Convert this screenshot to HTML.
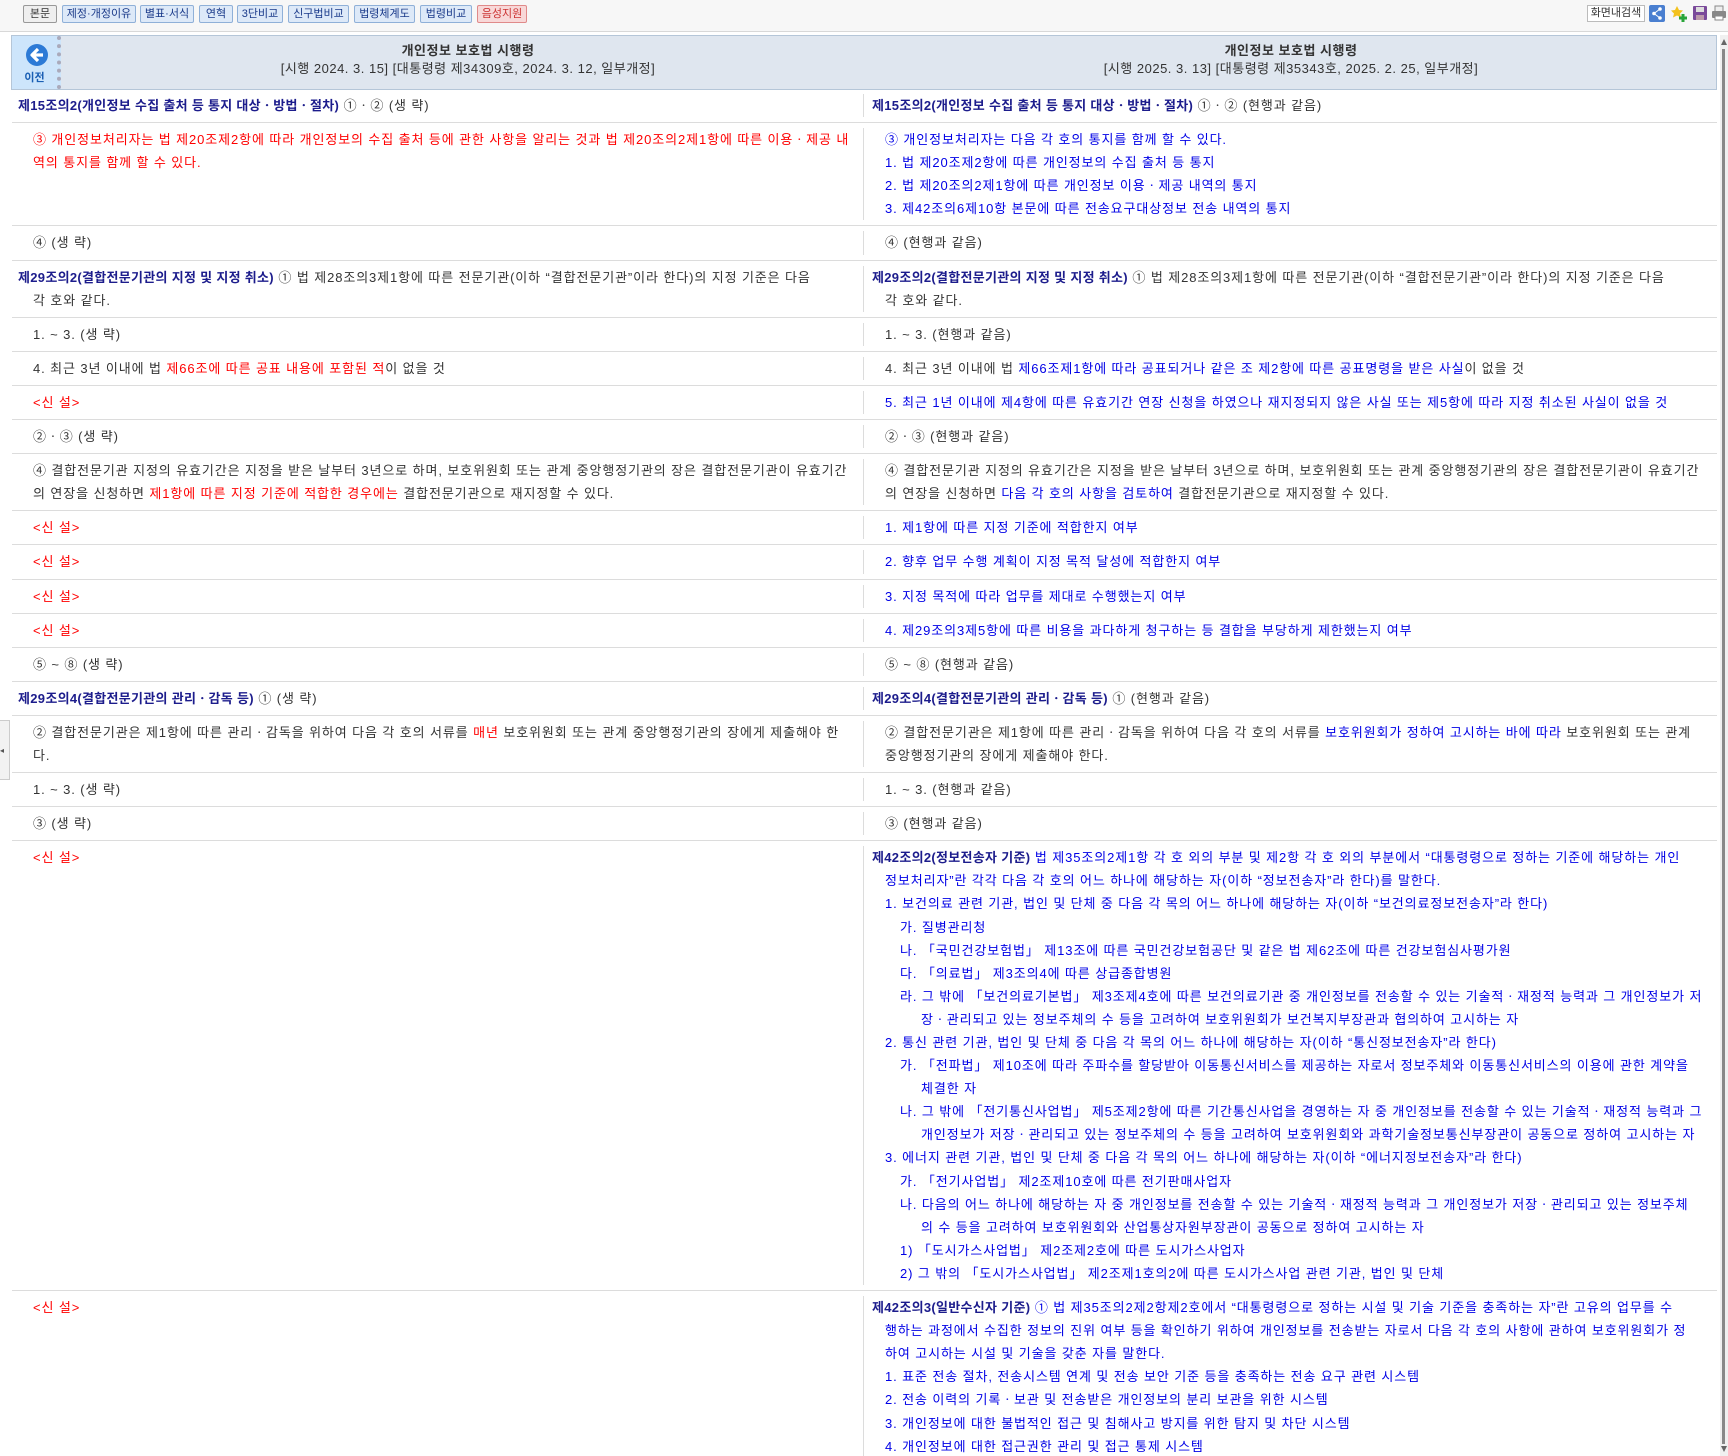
<!DOCTYPE html>
<html lang="ko"><head><meta charset="utf-8">
<style>
*{margin:0;padding:0;box-sizing:border-box}
html,body{width:1728px;height:1456px;overflow:hidden;background:#fff}
body{font-family:"Liberation Sans","Noto Sans CJK KR",sans-serif;font-size:13px;color:#333;position:relative}
.tb{position:absolute;left:0;top:0;width:1728px;height:32px;background:#f7f7f7;border-bottom:1px solid #d8d8d8}
.btn{position:absolute;top:5px;height:18px;border:1px solid #8fb0d8;background:#dde9f8;color:#1a3a8a;font-size:11px;line-height:16px;text-align:center;border-radius:2px;white-space:nowrap}
.hdr{position:absolute;left:11px;top:35px;width:1706px;height:55px;background:#dfe6ef;border:1px solid #b5c6d8}
.prev{position:absolute;left:0;top:0;width:49px;height:53px;background:#cde5fb;border-right:4px dotted #aab}
.ht{position:absolute;top:6px;text-align:center;font-size:13px;line-height:18px;color:#333;letter-spacing:0.5px}
.ht b{display:block;font-weight:bold;font-size:13px}
.rows{position:absolute;left:12px;top:90px;width:1705px}
.row{display:flex;border-bottom:1px solid #dcdcdc;padding:5px 0 5px}
.c{white-space:nowrap;line-height:23.1px;overflow:hidden;letter-spacing:0.9px}
.l{width:852px;border-right:1px solid #dcdcdc}
.r{width:853px}
.l>div{padding-left:21px}
.l>div.t{padding-left:6px}
.r>div{padding-left:21px}
.r>div.t{padding-left:8px}
.r>div.n{padding-left:36px}
.r>div.m{padding-left:57px}
.h{color:#1c1c8c;font-weight:bold;letter-spacing:0.3px}
.red{color:#f00}
.bl{color:#0000e6}
.sb{position:absolute;left:1720px;top:35px;width:8px;height:1421px;background:#f0f0f0}
</style></head><body>
<div class="tb">
<div class="btn" style="left:23px;width:34px;background:#efefef;border-color:#999;color:#333">본문</div>
<div class="btn" style="left:62px;width:74px">제정·개정이유</div>
<div class="btn" style="left:140px;width:54px">별표·서식</div>
<div class="btn" style="left:199px;width:34px">연혁</div>
<div class="btn" style="left:237px;width:46px">3단비교</div>
<div class="btn" style="left:288px;width:61px">신구법비교</div>
<div class="btn" style="left:354px;width:61px">법령체계도</div>
<div class="btn" style="left:420px;width:52px">법령비교</div>
<div class="btn" style="left:477px;width:50px;background:#f8d8d8;border-color:#e08a8a;color:#c33">음성지원</div>
<div style="position:absolute;left:1587px;top:5px;width:58px;height:17px;border:1px solid #bbb;background:#fff;font-size:11px;line-height:15px;text-align:center;color:#333">화면내검색</div>
<svg style="position:absolute;left:1649px;top:5px" width="16" height="17"><rect width="16" height="17" rx="2" fill="#4a7fd0"/><circle cx="11" cy="4" r="1.8" fill="#fff"/><circle cx="5" cy="8.5" r="1.8" fill="#fff"/><circle cx="11" cy="13" r="1.8" fill="#fff"/><path d="M11 4L5 8.5L11 13" stroke="#fff" fill="none"/></svg>
<svg style="position:absolute;left:1670px;top:5px" width="18" height="18"><path d="M7 1l2 4 4 .5-3 3 1 4-4-2-4 2 1-4-3-3 4-.5z" fill="#f3c21d"/><path d="M13 9v8M9 13h8" stroke="#2aa53a" stroke-width="3"/></svg>
<svg style="position:absolute;left:1693px;top:6px" width="14" height="14"><rect width="14" height="14" rx="1" fill="#7a4a9a"/><rect x="3" y="1" width="8" height="5" fill="#ddd"/><rect x="3" y="9" width="8" height="5" fill="#b9a"/></svg>
<svg style="position:absolute;left:1712px;top:5px" width="14" height="16"><rect x="3" y="1" width="8" height="6" fill="#eee" stroke="#888"/><rect x="0" y="6" width="14" height="7" rx="1" fill="#888"/><rect x="3" y="11" width="8" height="4" fill="#fff" stroke="#888"/></svg>
</div>
<div class="hdr">
<div class="prev"><svg style="position:absolute;left:14px;top:8px" width="22" height="22"><circle cx="11" cy="11" r="11" fill="#2c7ad6"/><path d="M12 5L6 11L12 17M6.5 11H17" stroke="#fff" stroke-width="3.2" fill="none" stroke-linejoin="round"/></svg><div style="position:absolute;left:0;top:33px;width:45px;text-align:center;font-size:11px;font-weight:bold;color:#1a5fb4">이전</div></div>
<div class="ht" style="left:60px;width:792px"><b>개인정보 보호법 시행령</b>[시행 2024. 3. 15] [대통령령 제34309호, 2024. 3. 12, 일부개정]</div>
<div class="ht" style="left:853px;width:852px"><b>개인정보 보호법 시행령</b>[시행 2025. 3. 13] [대통령령 제35343호, 2025. 2. 25, 일부개정]</div>
</div>
<div class="rows">
<div class="row" style="padding-top:4px;padding-bottom:5px"><div class="c l"><div class="t"><span class="h">제15조의2(개인정보 수집 출처 등 통지 대상ㆍ방법ㆍ절차)</span> ①ㆍ② (생 략)</div></div><div class="c r"><div class="t"><span class="h">제15조의2(개인정보 수집 출처 등 통지 대상ㆍ방법ㆍ절차)</span> ①ㆍ② (현행과 같음)</div></div></div>
<div class="row"><div class="c l red"><div>③ 개인정보처리자는 법 제20조제2항에 따라 개인정보의 수집 출처 등에 관한 사항을 알리는 것과 법 제20조의2제1항에 따른 이용ㆍ제공 내</div><div>역의 통지를 함께 할 수 있다.</div></div><div class="c r bl"><div>③ 개인정보처리자는 다음 각 호의 통지를 함께 할 수 있다.</div><div>1. 법 제20조제2항에 따른 개인정보의 수집 출처 등 통지</div><div>2. 법 제20조의2제1항에 따른 개인정보 이용ㆍ제공 내역의 통지</div><div>3. 제42조의6제10항 본문에 따른 전송요구대상정보 전송 내역의 통지</div></div></div>
<div class="row"><div class="c l"><div>④ (생 략)</div></div><div class="c r"><div>④ (현행과 같음)</div></div></div>
<div class="row"><div class="c l"><div class="t"><span class="h">제29조의2(결합전문기관의 지정 및 지정 취소)</span> ① 법 제28조의3제1항에 따른 전문기관(이하 “결합전문기관”이라 한다)의 지정 기준은 다음</div><div>각 호와 같다.</div></div><div class="c r"><div class="t"><span class="h">제29조의2(결합전문기관의 지정 및 지정 취소)</span> ① 법 제28조의3제1항에 따른 전문기관(이하 “결합전문기관”이라 한다)의 지정 기준은 다음</div><div>각 호와 같다.</div></div></div>
<div class="row"><div class="c l"><div>1. ~ 3. (생 략)</div></div><div class="c r"><div>1. ~ 3. (현행과 같음)</div></div></div>
<div class="row"><div class="c l"><div>4. 최근 3년 이내에 법 <span class="red">제66조에 따른 공표 내용에 포함된 적</span>이 없을 것</div></div><div class="c r"><div>4. 최근 3년 이내에 법 <span class="bl">제66조제1항에 따라 공표되거나 같은 조 제2항에 따른 공표명령을 받은 사실</span>이 없을 것</div></div></div>
<div class="row"><div class="c l red"><div>&lt;신 설&gt;</div></div><div class="c r bl"><div>5. 최근 1년 이내에 제4항에 따른 유효기간 연장 신청을 하였으나 재지정되지 않은 사실 또는 제5항에 따라 지정 취소된 사실이 없을 것</div></div></div>
<div class="row"><div class="c l"><div>②ㆍ③ (생 략)</div></div><div class="c r"><div>②ㆍ③ (현행과 같음)</div></div></div>
<div class="row"><div class="c l"><div>④ 결합전문기관 지정의 유효기간은 지정을 받은 날부터 3년으로 하며, 보호위원회 또는 관계 중앙행정기관의 장은 결합전문기관이 유효기간</div><div>의 연장을 신청하면 <span class="red">제1항에 따른 지정 기준에 적합한 경우에는</span> 결합전문기관으로 재지정할 수 있다.</div></div><div class="c r"><div>④ 결합전문기관 지정의 유효기간은 지정을 받은 날부터 3년으로 하며, 보호위원회 또는 관계 중앙행정기관의 장은 결합전문기관이 유효기간</div><div>의 연장을 신청하면 <span class="bl">다음 각 호의 사항을 검토하여</span> 결합전문기관으로 재지정할 수 있다.</div></div></div>
<div class="row"><div class="c l red"><div>&lt;신 설&gt;</div></div><div class="c r bl"><div>1. 제1항에 따른 지정 기준에 적합한지 여부</div></div></div>
<div class="row"><div class="c l red"><div>&lt;신 설&gt;</div></div><div class="c r bl"><div>2. 향후 업무 수행 계획이 지정 목적 달성에 적합한지 여부</div></div></div>
<div class="row"><div class="c l red"><div>&lt;신 설&gt;</div></div><div class="c r bl"><div>3. 지정 목적에 따라 업무를 제대로 수행했는지 여부</div></div></div>
<div class="row"><div class="c l red"><div>&lt;신 설&gt;</div></div><div class="c r bl"><div>4. 제29조의3제5항에 따른 비용을 과다하게 청구하는 등 결합을 부당하게 제한했는지 여부</div></div></div>
<div class="row"><div class="c l"><div>⑤ ~ ⑧ (생 략)</div></div><div class="c r"><div>⑤ ~ ⑧ (현행과 같음)</div></div></div>
<div class="row"><div class="c l"><div class="t"><span class="h">제29조의4(결합전문기관의 관리ㆍ감독 등)</span> ① (생 략)</div></div><div class="c r"><div class="t"><span class="h">제29조의4(결합전문기관의 관리ㆍ감독 등)</span> ① (현행과 같음)</div></div></div>
<div class="row"><div class="c l"><div>② 결합전문기관은 제1항에 따른 관리ㆍ감독을 위하여 다음 각 호의 서류를 <span class="red">매년</span> 보호위원회 또는 관계 중앙행정기관의 장에게 제출해야 한</div><div>다.</div></div><div class="c r"><div>② 결합전문기관은 제1항에 따른 관리ㆍ감독을 위하여 다음 각 호의 서류를 <span class="bl">보호위원회가 정하여 고시하는 바에 따라</span> 보호위원회 또는 관계</div><div>중앙행정기관의 장에게 제출해야 한다.</div></div></div>
<div class="row"><div class="c l"><div>1. ~ 3. (생 략)</div></div><div class="c r"><div>1. ~ 3. (현행과 같음)</div></div></div>
<div class="row"><div class="c l"><div>③ (생 략)</div></div><div class="c r"><div>③ (현행과 같음)</div></div></div>
<div class="row"><div class="c l red"><div>&lt;신 설&gt;</div></div><div class="c r bl">
<div class="t"><span class="h">제42조의2(정보전송자 기준)</span> 법 제35조의2제1항 각 호 외의 부분 및 제2항 각 호 외의 부분에서 “대통령령으로 정하는 기준에 해당하는 개인</div>
<div>정보처리자”란 각각 다음 각 호의 어느 하나에 해당하는 자(이하 “정보전송자”라 한다)를 말한다.</div>
<div>1. 보건의료 관련 기관, 법인 및 단체 중 다음 각 목의 어느 하나에 해당하는 자(이하 “보건의료정보전송자”라 한다)</div>
<div class="n">가. 질병관리청</div>
<div class="n">나. 「국민건강보험법」 제13조에 따른 국민건강보험공단 및 같은 법 제62조에 따른 건강보험심사평가원</div>
<div class="n">다. 「의료법」 제3조의4에 따른 상급종합병원</div>
<div class="n">라. 그 밖에 「보건의료기본법」 제3조제4호에 따른 보건의료기관 중 개인정보를 전송할 수 있는 기술적ㆍ재정적 능력과 그 개인정보가 저</div>
<div class="m">장ㆍ관리되고 있는 정보주체의 수 등을 고려하여 보호위원회가 보건복지부장관과 협의하여 고시하는 자</div>
<div>2. 통신 관련 기관, 법인 및 단체 중 다음 각 목의 어느 하나에 해당하는 자(이하 “통신정보전송자”라 한다)</div>
<div class="n">가. 「전파법」 제10조에 따라 주파수를 할당받아 이동통신서비스를 제공하는 자로서 정보주체와 이동통신서비스의 이용에 관한 계약을</div>
<div class="m">체결한 자</div>
<div class="n">나. 그 밖에 「전기통신사업법」 제5조제2항에 따른 기간통신사업을 경영하는 자 중 개인정보를 전송할 수 있는 기술적ㆍ재정적 능력과 그</div>
<div class="m">개인정보가 저장ㆍ관리되고 있는 정보주체의 수 등을 고려하여 보호위원회와 과학기술정보통신부장관이 공동으로 정하여 고시하는 자</div>
<div>3. 에너지 관련 기관, 법인 및 단체 중 다음 각 목의 어느 하나에 해당하는 자(이하 “에너지정보전송자”라 한다)</div>
<div class="n">가. 「전기사업법」 제2조제10호에 따른 전기판매사업자</div>
<div class="n">나. 다음의 어느 하나에 해당하는 자 중 개인정보를 전송할 수 있는 기술적ㆍ재정적 능력과 그 개인정보가 저장ㆍ관리되고 있는 정보주체</div>
<div class="m">의 수 등을 고려하여 보호위원회와 산업통상자원부장관이 공동으로 정하여 고시하는 자</div>
<div class="n">1) 「도시가스사업법」 제2조제2호에 따른 도시가스사업자</div>
<div class="n">2) 그 밖의 「도시가스사업법」 제2조제1호의2에 따른 도시가스사업 관련 기관, 법인 및 단체</div>
</div></div>
<div class="row" style="border-bottom:none"><div class="c l red"><div>&lt;신 설&gt;</div></div><div class="c r bl">
<div class="t"><span class="h">제42조의3(일반수신자 기준)</span> ① 법 제35조의2제2항제2호에서 “대통령령으로 정하는 시설 및 기술 기준을 충족하는 자”란 고유의 업무를 수</div>
<div>행하는 과정에서 수집한 정보의 진위 여부 등을 확인하기 위하여 개인정보를 전송받는 자로서 다음 각 호의 사항에 관하여 보호위원회가 정</div>
<div>하여 고시하는 시설 및 기술을 갖춘 자를 말한다.</div>
<div>1. 표준 전송 절차, 전송시스템 연계 및 전송 보안 기준 등을 충족하는 전송 요구 관련 시스템</div>
<div>2. 전송 이력의 기록ㆍ보관 및 전송받은 개인정보의 분리 보관을 위한 시스템</div>
<div>3. 개인정보에 대한 불법적인 접근 및 침해사고 방지를 위한 탐지 및 차단 시스템</div>
<div>4. 개인정보에 대한 접근권한 관리 및 접근 통제 시스템</div>
</div></div>
</div>
<div class="sb"><div style="position:absolute;left:1px;top:4px;width:0;height:0;border-left:3px solid transparent;border-right:3px solid transparent;border-bottom:6px solid #666"></div><div style="position:absolute;left:2px;top:14px;width:3px;height:1395px;background:#888"></div><div style="position:absolute;left:1px;top:1411px;width:0;height:0;border-left:3px solid transparent;border-right:3px solid transparent;border-top:6px solid #666"></div></div>
<div style="position:absolute;left:0;top:720px;width:10px;height:60px;background:#f2f2f2;border:1px solid #ccc;border-left:none;font-size:8px;line-height:60px;color:#555">◂</div>
</body></html>
